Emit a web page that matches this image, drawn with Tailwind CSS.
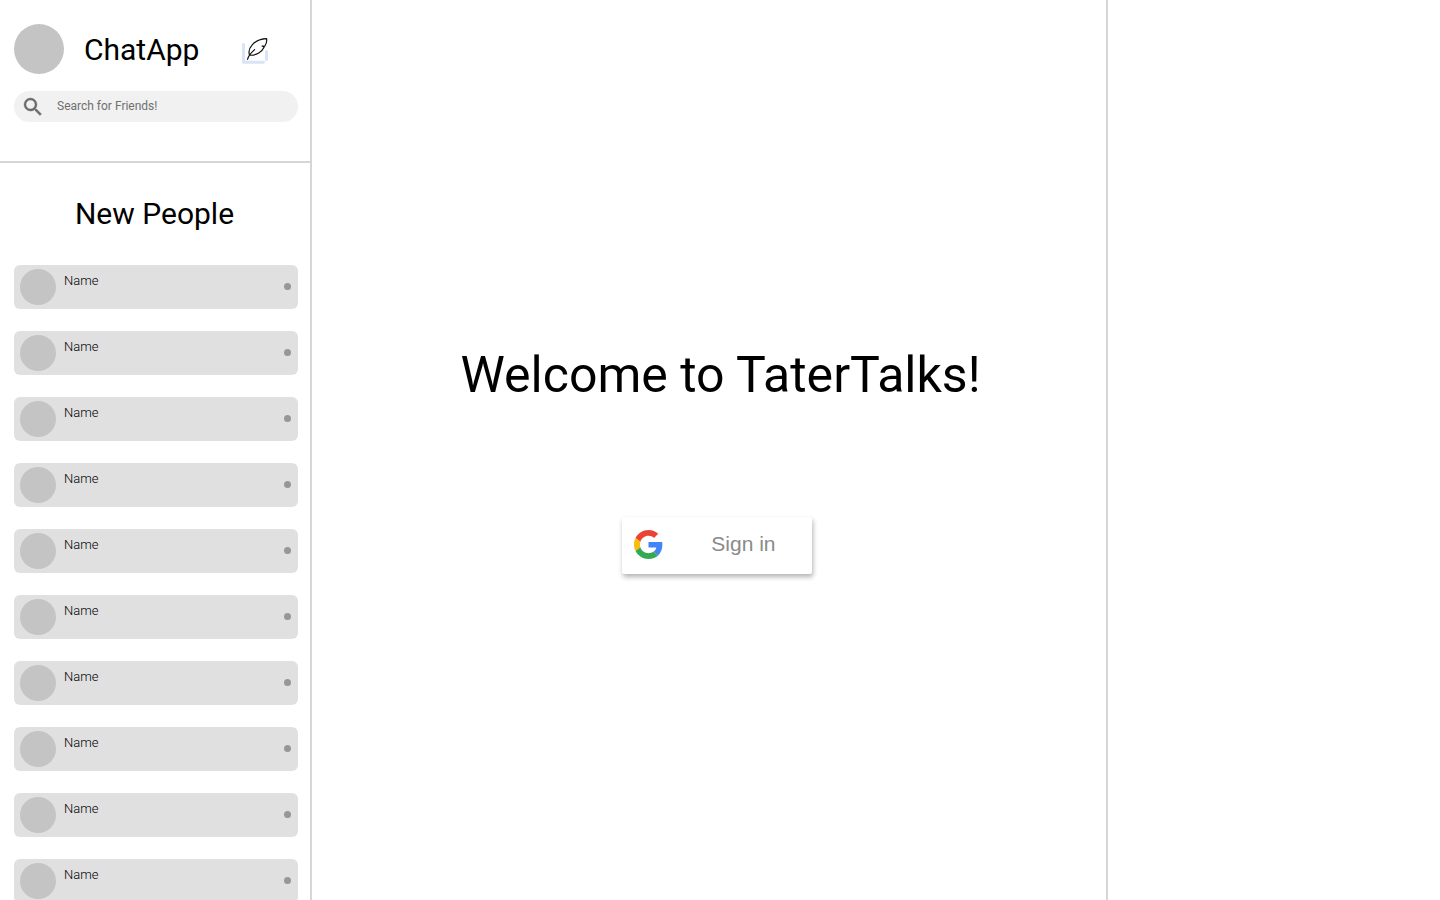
<!DOCTYPE html>
<html lang="en">
<head>
<meta charset="utf-8">
<meta name="viewport" content="width=device-width, initial-scale=1">
<title>ChatApp</title>
<script src="https://cdn.jsdelivr.net/npm/@tailwindcss/browser@4"></script>
</head>
<body class="bg-white text-black font-['Roboto',sans-serif]">
<div class="flex h-screen overflow-hidden">
  <aside class="flex w-[312px] shrink-0 flex-col overflow-hidden border-r-2 border-[#d6d6d6]">
    <header class="border-b-2 border-[#d6d6d6] pt-6 pr-3 pb-[39px] pl-3.5">
      <div class="flex items-center">
        <div class="size-[50px] rounded-full bg-[#c4c4c4]"></div>
        <h1 class="mt-0.5 ml-5 text-[30px] leading-[48px]">ChatApp</h1>
        <button type="button" aria-label="New message" class="mt-1.5 ml-[37px] size-10">
          <svg class="size-10" viewBox="0 0 40 40" fill="none">
            <path d="M7.5 12.5V30.3H27.5M30.5 19.5V27.5" stroke="#d9e4f7" stroke-width="3" stroke-linecap="round" stroke-linejoin="round"/>
            <path d="M11.5 27.3C12.2 24.5 14.6 21.2 18.6 17.6M13.6 23.2C11 16.500 18 7 30.6 6.6C31 9.5 30.4 12 28.900 14H26L28.200 15C26.200 19.5 20.5 23.800 13.6 23.2" stroke="#111" stroke-width="1.200" stroke-linecap="round" stroke-linejoin="round"/>
          </svg>
        </button>
      </div>
      <label class="mt-[17px] flex h-[31px] items-center rounded-full bg-[#f1f1f1] pl-[7px]">
        <svg class="size-6 shrink-0" viewBox="0 0 24 24" fill="#6b6b6b" aria-hidden="true">
          <path d="M15.5 14h-.79l-.28-.27A6.47 6.47 0 0 0 16 9.500 6.500 6.500 0 1 0 9.500 16c1.610 0 3.090-.59 4.230-1.570l.27.28v.79l5 4.990L20.490 19l-4.990-5zm-6 0C7.010 14 5 11.990 5 9.500S7.010 5 9.500 5 14 7.010 14 9.500 11.990 14 9.500 14z" stroke="#6b6b6b" stroke-width=".4"/>
        </svg>
        <input type="text" aria-label="Search for Friends" placeholder="Search for Friends!" class="mb-0.5 ml-3 h-7 min-w-0 flex-1 bg-transparent text-xs outline-none placeholder:text-[#6f6f6f]">
      </label>
    </header>
    <h2 class="mt-[31px] mr-px mb-[31px] text-center text-[30px] leading-10">New People</h2>
    <ul id="people" class="flex flex-col gap-[22px] pr-3 pl-3.5"></ul>
  </aside>
  <main class="flex min-w-0 flex-1 flex-col items-center pt-[345px] pl-[23px]">
    <h2 class="text-[50px] leading-[60px] whitespace-nowrap">Welcome to TaterTalks!</h2>
    <button type="button" class="mt-[112px] mr-2 flex h-[57px] w-[190px] items-center rounded-xs bg-white pr-9 pb-[3px] pl-3 font-['Liberation_Sans',sans-serif] text-[21px] text-[#8a8a8a] shadow-[1px_3px_5px_rgba(0,0,0,0.3)]">
      <svg class="size-[29px]" viewBox="0 0 48 48" aria-hidden="true">
        <path fill="#ea4335" d="M24 9.500c3.540 0 6.710 1.220 9.210 3.600l6.850-6.850C35.900 2.380 30.470 0 24 0 14.620 0 6.510 5.380 2.560 13.220l7.980 6.190C12.430 13.720 17.740 9.500 24 9.500z"/>
        <path fill="#4285f4" d="M46.980 24.550c0-1.570-.15-3.090-.38-4.550H24v9.020h12.940c-.58 2.960-2.260 5.480-4.780 7.180l7.730 6c4.510-4.180 7.090-10.360 7.090-17.650z"/>
        <path fill="#fbbc05" d="M10.530 28.590c-.48-1.450-.76-2.990-.76-4.590s.27-3.140.76-4.590l-7.980-6.190C.92 16.460 0 20.120 0 24c0 3.880.92 7.540 2.560 10.780l7.970-6.190z"/>
        <path fill="#34a853" d="M24 48c6.480 0 11.930-2.130 15.890-5.810l-7.730-6c-2.150 1.450-4.920 2.300-8.160 2.300-6.260 0-11.570-4.220-13.470-9.910l-7.980 6.190C6.510 42.620 14.620 48 24 48z"/>
      </svg>
      <span class="ml-auto">Sign in</span>
    </button>
  </main>
  <aside class="w-[334px] shrink-0 border-l-2 border-[#d6d6d6]"></aside>
</div>
<template id="person">
  <li class="flex h-11 shrink-0 items-center rounded-md bg-[#e0e0e0] pr-[7px] pl-1.5">
    <div class="size-9 rounded-full bg-[#c4c4c4]"></div>
    <span class="mb-3 ml-2 text-[13px] leading-4 font-light">Name</span>
    <span class="mb-px ml-auto size-[7px] rounded-full bg-[#979797]"></span>
  </li>
</template>
<script>
  const list = document.getElementById('people');
  const person = document.getElementById('person');
  for (let i = 0; i < 10; i++) list.append(person.content.cloneNode(true));
</script>
</body>
</html>
